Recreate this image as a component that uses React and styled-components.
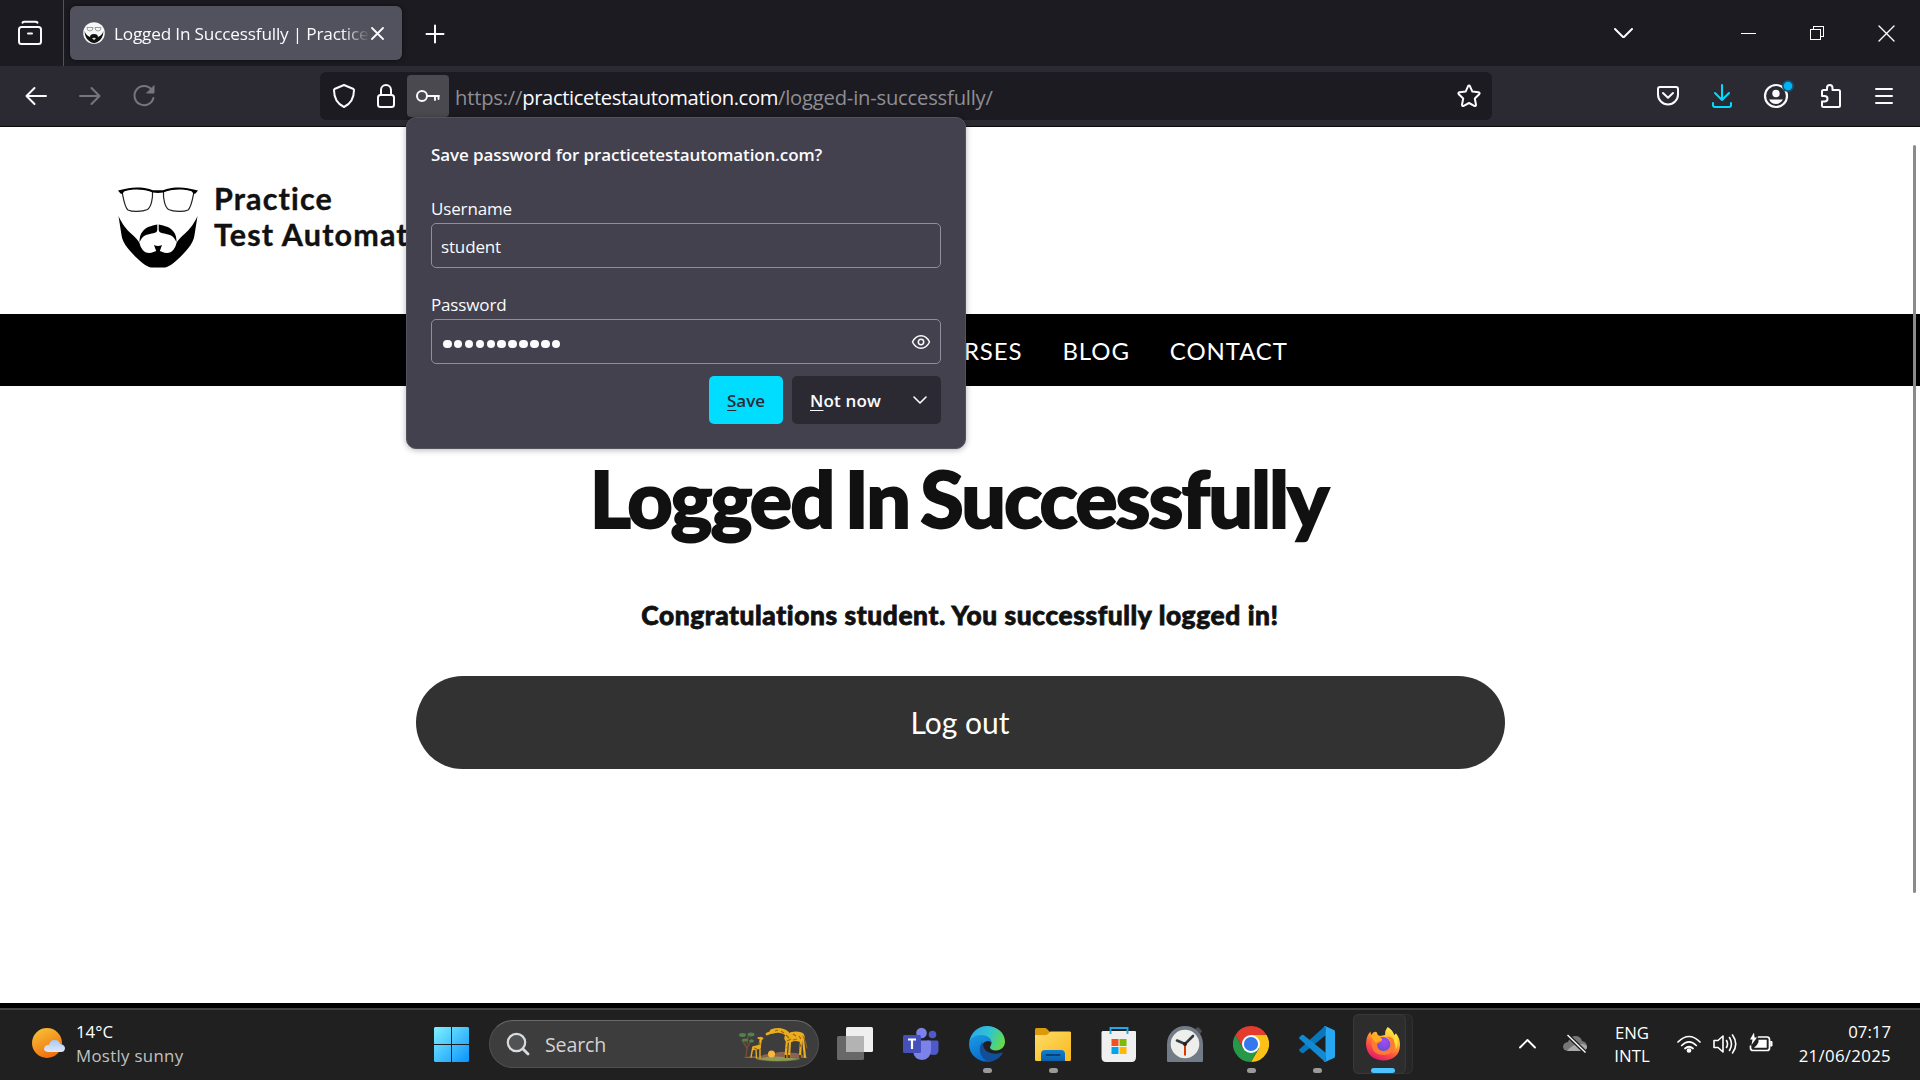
import React from "react";
import styled, { createGlobalStyle } from "styled-components";

const GlobalStyle = createGlobalStyle`
  * { box-sizing: border-box; }
  html, body { margin: 0; padding: 0; background: #000; overflow: hidden; }
  svg { display: block; flex: none; }
`;

const ui = `"Open Sans", "Noto Sans", sans-serif`;
const site = `Lato, sans-serif`;

const Screen = styled.div`
  width: 1920px;
  height: 1080px;
  display: flex;
  flex-direction: column;
  overflow: hidden;
  background: #000;
  font-family: ${ui};
`;

/* ---------- browser chrome ---------- */
const TabStrip = styled.header`
  height: 66px;
  display: flex;
  align-items: center;
  background: #1c1b22;
  color: #fbfbfe;
`;
const ViewButton = styled.div`
  width: 64px;
  height: 66px;
  padding-right: 3px;
  border-right: 1px solid #53525c;
  display: flex;
  align-items: center;
  justify-content: center;
`;
const Tab = styled.div`
  width: 332px;
  height: 54px;
  margin-left: 6px;
  padding: 0 17px 0 13px;
  display: flex;
  align-items: center;
  background: #52525e;
  border-radius: 6px;
  box-shadow: 0 0 5px rgba(0, 0, 0, 0.6);
`;
const TabTitle = styled.span`
  width: 256px;
  margin: 0 1px 0 9px;
  padding-top: 1px;
  white-space: nowrap;
  font-size: 17.2px;
  line-height: 26px;
  letter-spacing: -0.18px;
  mask-image: linear-gradient(to right, #000 228px, transparent 256px);
`;
const StripButton = styled.div`
  width: ${(p) => p.$w}px;
  height: 66px;
  padding-top: ${(p) => p.$pt || 0}px;
  display: flex;
  align-items: center;
  justify-content: center;
  margin-left: ${(p) => p.$ml || 0}px;
`;
const Spacer = styled.div`
  flex: 1;
`;
const NavBar = styled.div`
  height: 61px;
  padding: 0 9px 1px;
  display: flex;
  align-items: center;
  background: #2b2a33;
  border-bottom: 1px solid #0c0c0d;
  color: #fbfbfe;
`;
const ToolButton = styled.div`
  width: 54px;
  height: 48px;
  display: flex;
  align-items: center;
  justify-content: center;
  color: ${(p) => p.$color || "#fbfbfe"};
`;
const UrlBar = styled.div`
  width: 1172px;
  height: 48px;
  margin: 0 149px 0 149px;
  padding: 0 5px 0 3px;
  display: flex;
  align-items: center;
  background: #1c1b22;
  border-radius: 6px;
`;
const UrlIcon = styled.div`
  width: 42px;
  height: 42px;
  display: flex;
  align-items: center;
  justify-content: center;
  border-radius: 4px;
  background: ${(p) => (p.$active ? "#4a494f" : "transparent")};
  margin-right: ${(p) => p.$mr || 0}px;
`;
const Url = styled.span`
  flex: 1;
  font-size: 20.2px;
  line-height: 30px;
  letter-spacing: -0.2px;
  padding-top: 2px;
  white-space: nowrap;
  color: #8f8f94;
  b {
    font-weight: 400;
    color: #fbfbfe;
    letter-spacing: -0.38px;
  }
`;

/* ---------- web page ---------- */
const Page = styled.main`
  height: 876px;
  position: relative;
  display: flex;
  flex-direction: column;
  background: #fff;
  color: #111;
  font-family: ${site};
  font-variant-ligatures: none;
`;
const SiteHeader = styled.div`
  height: 187px;
  padding: 53px 0 0 118px;
  display: flex;
  align-items: flex-start;
`;
const LogoMark = styled.div`
  padding-top: 7px;
`;
const SiteName = styled.div`
  margin-left: 16px;
  font-size: 30.5px;
  line-height: 36px;
  font-weight: 700;
  letter-spacing: 1.15px;
  white-space: nowrap;
  -webkit-text-stroke: 0.4px #111;
`;
const Menu = styled.nav`
  height: 72px;
  padding-top: 1px;
  display: flex;
  align-items: center;
  justify-content: center;
  gap: 40px;
  background: #000;
  color: #fff;
  font-size: 24px;
  line-height: 36px;
  letter-spacing: 0.9px;
`;
const Article = styled.section`
  display: flex;
  flex-direction: column;
  align-items: center;
  padding-top: 66px;
`;
const Heading = styled.h1`
  margin: 0;
  padding-right: 3px;
  font-size: 79px;
  line-height: 92px;
  font-weight: 900;
  letter-spacing: -1.95px;
  word-spacing: -5.5px;
  white-space: nowrap;
  -webkit-text-stroke: 1.8px #111;
`;
const Message = styled.p`
  margin: 53px 0 0;
  font-size: 26.3px;
  line-height: 36px;
  font-weight: 900;
  letter-spacing: 0.6px;
  white-space: nowrap;
  -webkit-text-stroke: 0.8px #111;
`;
const LogOut = styled.button`
  width: 1089px;
  height: 93px;
  margin-top: 43px;
  padding: 0 0 2px;
  border: 0;
  border-radius: 47px;
  background: #323232;
  color: #fff;
  font-family: ${site};
  font-size: 30px;
`;
const ScrollThumb = styled.div`
  position: absolute;
  right: 4px;
  top: 18px;
  width: 3px;
  height: 748px;
  border-radius: 2px;
  background: #8b8b8b;
`;

/* ---------- password prompt ---------- */
const Prompt = styled.aside`
  position: absolute;
  left: 406px;
  top: 117px;
  width: 560px;
  height: 332px;
  padding: 24px 24px 0;
  background: #42414d;
  border: 1px solid #53525e;
  border-radius: 10px;
  box-shadow: 0 1px 6px rgba(0, 0, 0, 0.3);
  color: #fbfbfe;
  font-size: 17px;
  line-height: 26px;
  letter-spacing: -0.15px;
  z-index: 2;
`;
const PromptTitle = styled.div`
  font-weight: 600;
  letter-spacing: -0.1px;
  white-space: nowrap;
`;
const FieldLabel = styled.div`
  margin-top: ${(p) => p.$mt}px;
`;
const Field = styled.div`
  height: 45px;
  margin-top: ${(p) => p.$mt}px;
  padding: 0 9px;
  border: 1px solid #8f8f9d;
  border-radius: 5px;
  display: flex;
  align-items: center;
  justify-content: space-between;
  span {
    padding-top: 2px;
  }
`;
const Dots = styled.div`
  display: flex;
  gap: 2.4px;
  padding: 5px 0 0 2px;
`;
const Dot = styled.i`
  width: 8.5px;
  height: 8.5px;
  border-radius: 50%;
  background: #fbfbfe;
`;
const Actions = styled.div`
  margin-top: 12px;
  display: flex;
  justify-content: flex-end;
  gap: 9px;
`;
const Action = styled.button`
  width: ${(p) => p.$w}px;
  height: 48px;
  padding: 0 14px 0 18px;
  border: 0;
  border-radius: 5px;
  display: flex;
  align-items: center;
  justify-content: space-between;
  background: ${(p) => (p.$primary ? "#00ddff" : "#2b2a33")};
  color: ${(p) => (p.$primary ? "#2b2a33" : "#fbfbfe")};
  font-family: ${ui};
  font-size: 17px;
  font-weight: 600;
  letter-spacing: ${(p) => (p.$primary ? 0 : 0.15)}px;
  white-space: nowrap;
  u {
    text-underline-offset: 3px;
    text-decoration-thickness: 1px;
  }
`;

/* ---------- taskbar ---------- */
const Taskbar = styled.footer`
  height: 72px;
  margin-top: 5px;
  padding-bottom: 2px;
  border-top: 2px solid #434343;
  background: #202020;
  display: flex;
  align-items: center;
  color: #fff;
  font-size: 16.8px;
  line-height: 24px;
`;
const Weather = styled.div`
  width: 434px;
  padding-left: 32px;
  display: flex;
  align-items: center;
  gap: 11px;
`;
const Lines = styled.div`
  display: flex;
  flex-direction: column;
  white-space: nowrap;
  text-align: ${(p) => p.$align || "left"};
  margin-left: ${(p) => p.$ml || 0}px;
  width: ${(p) => (p.$w ? `${p.$w}px` : "auto")};
  line-height: ${(p) => p.$lh || 24}px;
`;
const Spread = styled.span`
  color: ${(p) => p.$color || "#fff"};
  letter-spacing: 0.33px;
`;
const Search = styled.div`
  width: 330px;
  height: 48px;
  margin: 0 18px 0 20px;
  padding: 0 9px 0 16px;
  display: flex;
  align-items: center;
  background: #3d3d3d;
  border: 1px solid #505050;
  border-top-color: #6a6a6a;
  border-radius: 24px;
  color: #d3d3d3;
  font-size: 19.6px;
  letter-spacing: -0.15px;
  span {
    flex: 1;
    margin-left: 15px;
    padding-top: 1px;
  }
`;
const Apps = styled.div`
  display: flex;
  gap: 6px;
  height: 60px;
  margin-left: -12px;
`;
const AppSlot = styled.div`
  width: 60px;
  height: 60px;
  padding-top: 12px;
  display: flex;
  flex-direction: column;
  align-items: center;
  gap: 6px;
  border-radius: 6px;
`;
const ActiveApp = styled.div`
  width: 60px;
  height: 60px;
  border-radius: 6px;
  background: #262626;
  box-shadow: inset 0 0 0 1px #303030;
`;
const ActiveFront = styled(AppSlot)`
  width: 53px;
  padding-left: 7px;
  background: #2d2d2d;
  box-shadow: inset 0 0 0 1px #383838;
`;
const Running = styled.i`
  width: ${(p) => (p.$active ? 24 : 9)}px;
  height: 5px;
  border-radius: 3px;
  background: ${(p) => (p.$active ? "#4cc2ff" : "#9a9a9a")};
`;
const Tray = styled.div`
  flex: 1;
  display: flex;
  align-items: center;
  justify-content: flex-end;
  padding-right: 29px;
`;
const TrayIcon = styled.div`
  width: 24px;
  height: 24px;
  margin-left: ${(p) => p.$ml}px;
  display: flex;
  align-items: center;
  justify-content: center;
`;

/* ---------- drawings ---------- */
const Line = ({ w = 24, h = 24, sw = 2, children, vb }) => (
  <svg width={w} height={h} viewBox={vb || `0 0 ${w} ${h}`} fill="none" stroke="currentColor" strokeWidth={sw} strokeLinecap="round" strokeLinejoin="round">
    {children}
  </svg>
);

const beardHalf = "M40.200 80.500H33C27 79.500 17 70 10 61.500C6 57 4 52 3.500 48L.5 29C4 37 9 43 13 46.500C17 50 20 53 21.500 56C22.500 61 26 66 31 66C35 66 37 63.500 40.200 64Z";
const moustache = "M39.300 37.500C33 39 28 40 25 44C22 47 21.500 51 21.500 55.500C23 52 24.500 49.500 28 48C33 46 39 47 39.300 43Z";
const lens = "M4 4.500C12 .5 26 .5 34.500 4.500C35 12 33 20 29.500 22.500C24 25 14 25 10 23C6.500 20 5.500 12 4 4.500Z";

const Beard = ({ size = 80, stroke = 1.2 }) => (
  <svg width={size} height={size + 1} viewBox="0 0 80 81">
    {[undefined, "matrix(-1 0 0 1 80 0)"].map((t, i) => (
      <g key={i} transform={t}>
        <path d={lens} fill="none" stroke="#222" strokeWidth={stroke} />
        <path d="M0 3.500C6 2 14 .2 20 .5C27 .6 31 2 35 3.200H40V6L35 5.500C27 2 14 1.500 6 4.500L4.500 7L2.500 6.500Z" />
        <path d={beardHalf} />
        <path d={moustache} />
      </g>
    ))}
    <path d="M36 58Q40 60 44 58L41.500 65H38.500Z" />
  </svg>
);

const Favicon = () => (
  <svg width="22" height="22" viewBox="0 0 22 22">
    <circle cx="11" cy="11" r="10.800" fill="#f7f7f7" />
    <path d="M4 5.500H10Q10 9 7 9T4 5.500ZM12 5.500H18Q18 9 15 9T12 5.500Z" fill="none" stroke="#777" strokeWidth=".7" />
    <path d="M1.500 9Q3 13.500 7 15Q7 12 11 12T15 15Q19 13.500 20.500 9Q20 17 14.500 20Q11 22 7.500 20Q2 17 1.500 9Z" fill="#111" />
    <path d="M9 16.500Q11 15 13 16.500L11 18Z" fill="#ddd" />
  </svg>
);

const ViewIcon = () => (
  <Line w={26} h={26}>
    <path d="M5.500 2.600Q6 1.800 7.500 1.800H18.500Q20 1.800 20.500 2.600" />
    <rect x="2" y="7" width="22" height="17" rx="2.500" />
    <path d="M11 13.500H15" />
  </Line>
);
const Cross = ({ s = 12, sw = 2 }) => (
  <Line w={s + 2} h={s + 2} sw={sw}>
    <path d={`M1 1L${s + 1} ${s + 1}M${s + 1} 1L1 ${s + 1}`} />
  </Line>
);
const Chevron = ({ w = 18, sw = 2, up }) => (
  <Line w={w + 2} h={w / 2 + 2} sw={sw}>
    <path d={up ? `M1 ${w / 2 + 1}L${w / 2 + 1} 1L${w + 1} ${w / 2 + 1}` : `M1 1L${w / 2 + 1} ${w / 2 + 1}L${w + 1} 1`} />
  </Line>
);
const Arrow = ({ flip }) => (
  <Line w={24} h={20}>
    <g transform={flip ? "matrix(-1 0 0 1 24 0)" : undefined}>
      <path d="M2.500 10H22M10.500 2L2.500 10L10.500 18" />
    </g>
  </Line>
);
const Reload = () => (
  <Line w={24} h={24}>
    <path d="M19.500 5.500A9.600 9.600 0 1 0 21.400 14" />
    <path d="M22 2V9H15Z" fill="currentColor" strokeWidth="1" />
  </Line>
);
const Shield = () => (
  <Line w={24} h={26}>
    <path d="M12 2L21.500 6Q22 6.300 22 7C22 14 19.500 20.500 12 24C4.500 20.500 2 14 2 7Q2 6.300 2.500 6Z" />
  </Line>
);
const Lock = () => (
  <Line w={20} h={26}>
    <rect x="2" y="12" width="16" height="12" rx="2.500" />
    <path d="M5 12V7A5 5 0 0 1 15 7V12" />
  </Line>
);
const Key = () => (
  <Line w={26} h={14}>
    <circle cx="7" cy="7" r="5" />
    <path d="M12 7H24M20 7V11M23.500 7V10" strokeWidth="1.900" />
  </Line>
);
const Star = () => (
  <Line w={26} h={26}>
    <path d="M13 2.500Q13.600 2.500 14 3.300L16.400 8.600L22.500 9.300Q24.300 9.700 23.200 11.200L18.800 15.500L20 21.700Q20 23.500 18.300 22.800L13 20L7.700 22.800Q6 23.500 6 21.700L7.200 15.500L2.800 11.200Q1.700 9.700 3.500 9.300L9.600 8.600L12 3.300Q12.400 2.500 13 2.500Z" />
  </Line>
);
const Pocket = () => (
  <Line w={24} h={22}>
    <path d="M4 2H20Q22 2 22 4V9.500A10 10 0 0 1 2 9.500V4Q2 2 4 2Z" />
    <path d="M7 8L12 12.800L17 8" />
  </Line>
);
const Download = () => (
  <Line w={23} h={26}>
    <path d="M11 2V17M4 10L11 17L18 10M2 20V22Q2 24 4 24H18Q20 24 20 22V20" />
  </Line>
);
const Account = () => (
  <svg width="42" height="34" viewBox="0 0 42 34">
    <circle cx="21" cy="17" r="11" fill="none" stroke="currentColor" strokeWidth="2.200" />
    <circle cx="21" cy="14.500" r="3.700" fill="currentColor" />
    <path d="M14 20.500H28Q25.500 25 21 25T14 20.500Z" fill="currentColor" />
    <circle cx="33" cy="7" r="6" fill="#164f70" />
    <circle cx="33" cy="7" r="4.300" fill="#00b3f4" />
  </svg>
);
const Puzzle = () => (
  <Line w={22} h={26}>
    <path d="M3 13V8.500Q3 7 4.500 7H8V5Q8 2 10.800 2Q13.500 2 13.500 5V7H19.500Q21 7 21 8.500V22.500Q21 24 19.500 24H4.500Q3 24 3 22.500V18.500H5.500Q8.500 18.500 8.500 15.700Q8.500 13 5.500 13Z" />
  </Line>
);
const Burger = () => (
  <Line w={20} h={18}>
    <path d="M2 2H18M2 9H18M2 16H18" />
  </Line>
);
const Minimise = () => (
  <svg width="15" height="15"><path d="M0 7H15" stroke="#fff" shapeRendering="crispEdges" /></svg>
);
const Restore = () => (
  <svg width="15" height="15" viewBox="0 0 15 15" fill="none" stroke="#fff" shapeRendering="crispEdges">
    <rect x=".5" y="3.500" width="10" height="10" />
    <path d="M3.500 3.500V.5H13.500V10.500H10.500" />
  </svg>
);
const Eye = () => (
  <Line w={20} h={16} sw={1.5}>
    <path d="M1.500 8Q4.500 1.800 10 1.800T18.500 8Q15.500 14.200 10 14.200T1.500 8Z" />
    <circle cx="10" cy="8" r="2.700" />
  </Line>
);

const SunCloud = () => (
  <svg width="33" height="32" viewBox="0 0 33 32">
    <defs>
      <linearGradient id="sun" x1=".2" y1="0" x2=".7" y2="1"><stop stopColor="#f8c136" /><stop offset="1" stopColor="#ee6a0d" /></linearGradient>
      <linearGradient id="cloud" x1="0" y1="0" x2="0" y2="1"><stop stopColor="#a9c8f5" /><stop offset="1" stopColor="#dfe9fa" /></linearGradient>
    </defs>
    <circle cx="15" cy="15" r="15" fill="url(#sun)" />
    <path d="M16 24Q12 23.500 12 20.500Q12.500 17 17 16.800Q18.500 11.500 23 12Q27 12 28 16Q33 16.500 33 20.500Q32.500 24 29 24Z" fill="url(#cloud)" />
  </svg>
);
const WindowsLogo = () => (
  <svg width="35" height="35" viewBox="0 0 35 35">
    <defs>
      <linearGradient id="win" gradientUnits="userSpaceOnUse" x1="0" y1="0" x2="35" y2="35"><stop stopColor="#80f2ff" /><stop offset="1" stopColor="#0a93fb" /></linearGradient>
    </defs>
    <path d="M1 0H17V17H0V1ZM18 0H34L35 1V17H18ZM0 18H17V35H1L0 34ZM18 18H35V34L34 35H18Z" fill="url(#win)" />
  </svg>
);
const Magnifier = () => (
  <svg width="24" height="24" viewBox="0 0 24 24" fill="none" stroke="#d8dcdf" strokeLinecap="round">
    <circle cx="10.500" cy="10.500" r="8.700" strokeWidth="2.200" fill="#505254" />
    <path d="M17 17L22 22" strokeWidth="2.800" />
  </svg>
);
const Giraffes = () => (
  <svg width="70" height="35" viewBox="0 0 70 35">
    <ellipse cx="39" cy="31.500" rx="22" ry="3" fill="#6d7440" />
    <path d="M4 31Q12 28 20 30Q26 26 34 27Q42 23 50 26Q60 25 69 31Z" fill="#8c6250" />
    <path d="M18 32Q36 27 59 32Q40 36 18 32Z" fill="#8f9a55" />
    <circle cx="32.500" cy="27" r="3.500" fill="#ffb638" />
    <path d="M7 30L8 21L3 13M8 21L13 12M8 17L9 9" stroke="#7a4b35" strokeWidth="1.500" fill="none" />
    <g fill="#4f8448">
      <ellipse cx="3.500" cy="8" rx="3.500" ry="1.900" /><ellipse cx="12" cy="7.500" rx="3.500" ry="1.900" /><ellipse cx="6" cy="13" rx="3" ry="1.600" /><ellipse cx="12.500" cy="14" rx="2.500" ry="1.500" />
    </g>
    <g stroke="#e9ad1e" fill="none" strokeLinecap="round" strokeLinejoin="round">
      <path d="M22 11L20.500 20" strokeWidth="2.400" />
      <path d="M19.500 11L23.500 11.500" strokeWidth="1.900" />
      <path d="M15 21L20 20" strokeWidth="4.200" />
      <path d="M13.500 22L12 30M17 23L17.500 31M21 22V31" strokeWidth="1.400" />
      <path d="M28 7L33 5" strokeWidth="2.800" />
      <path d="M33 4.500Q42 1.500 48 6.500L51 12" strokeWidth="4.500" />
      <path d="M50 11Q56 8 61 10" strokeWidth="9.500" />
      <path d="M48 13L46.500 30M51 15L50 30M62 13L61 30M64 12L66 30" strokeWidth="2.200" />
      <path d="M64 9Q67 14 68 21" strokeWidth="1" stroke="#a86516" />
    </g>
    <path d="M36 4L39 3M42 4L45 6M47 8L50 11M48 14L52 12M54 7L57 9M54 13L58 12M60 9L62 12M61 17L62 20M48 20L49 23M20 15L21 18M15 21L18 22" stroke="#a4660e" strokeWidth="1.200" />
    <path d="M46.500 28V31M50 28V31M61 28V31" stroke="#4b1c10" strokeWidth="1.600" />
  </svg>
);
const TaskView = () => (
  <svg width="36" height="36" viewBox="0 0 36 36">
    <rect x="9" y="1" width="27" height="25" rx="1.500" fill="#efefef" />
    <rect x="0" y="10" width="27" height="24" rx="1.500" fill="#686868" />
    <path d="M9 10H27V26H9Z" fill="#b3b3b3" />
  </svg>
);
const Teams = () => (
  <svg width="36" height="36" viewBox="0 0 36 36">
    <circle cx="29.500" cy="8.500" r="3.800" fill="#5059c9" />
    <path d="M24 14.500H34Q35.500 14.500 35.500 16V24Q35.500 29 30.500 29Q27 29 25 27Z" fill="#5059c9" />
    <circle cx="18.500" cy="7" r="5.300" fill="#7b83eb" />
    <path d="M10 14.500H26.500Q28 14.500 28 16V24.500Q27.500 33.500 19 34Q11 33.500 10 25Z" fill="#7b83eb" />
    <rect x="0" y="9" width="18" height="18" rx="1.500" fill="#4650bb" />
    <path d="M5 13.500H13M9 13.500V23" stroke="#fff" strokeWidth="2.200" />
  </svg>
);
const Edge = () => (
  <svg width="36" height="36" viewBox="0 0 36 36">
    <defs>
      <linearGradient id="edgeTop" x1="0" y1=".3" x2="1" y2=".6"><stop stopColor="#2ba8e8" /><stop offset=".5" stopColor="#2fc3d5" /><stop offset="1" stopColor="#67dc45" /></linearGradient>
      <linearGradient id="edgeLow" x1="0" y1="0" x2=".4" y2="1"><stop stopColor="#1a9de6" /><stop offset="1" stopColor="#0c6ccb" /></linearGradient>
    </defs>
    <path d="M0 17C1 7 9 0 18 0C28 0 36 7 36 15.500C36 21 32 24.500 27 24.500C23 24.500 21 23 21 21.500C21 20 22.500 19 22.500 16.500C22 12 16 9 10 10C5 11 2 13 0 17Z" fill="url(#edgeTop)" />
    <path d="M0 18C1 12 6 9 12 9C18 9 22.500 12.500 22.500 17C20 13.500 15 15 13.500 19C11 26 18 35 23 35C13 38 0 31 0 18Z" fill="url(#edgeLow)" />
    <path d="M13.500 16C8 22 11 33 20 36C26 35 31 32 33.500 27.500Q34 26 32.500 26.500C24 30 14 26 14 18Z" fill="#124f9b" />
  </svg>
);
const Folder = () => (
  <svg width="36" height="36" viewBox="0 0 36 36">
    <defs>
      <linearGradient id="fold" x1="0" y1="0" x2="1" y2="1"><stop stopColor="#ffdc68" /><stop offset="1" stopColor="#f8b91d" /></linearGradient>
      <linearGradient id="foldBlue" x1="0" y1="0" x2="0" y2="1"><stop stopColor="#127fd2" /><stop offset="1" stopColor="#0b5fa9" /></linearGradient>
    </defs>
    <path d="M0 3.500Q0 2 1.500 2H10Q11 2 12 3L15 6H36V14H0Z" fill="#dc9a0a" />
    <path d="M0 9H11Q12 9 13 8L15.500 5.500H35Q36 5.500 36 7V33.500Q36 35 34.500 35H1.500Q0 35 0 33.500Z" fill="url(#fold)" />
    <path d="M6 35V28Q6 24 10 24H26Q30 24 30 28V35Z" fill="url(#foldBlue)" />
    <path d="M11.500 29H24.500" stroke="#064277" strokeWidth="2" strokeLinecap="round" />
  </svg>
);
const Store = () => (
  <svg width="36" height="36" viewBox="0 0 36 36">
    <path d="M1.500 5H34.500L35 6V31Q35 36 30.500 36H5Q.5 36 .5 31V6Z" fill="#f0f0f0" />
    <path d="M9.500 8V2H26.500V8" fill="none" stroke="#20a8e8" strokeWidth="1.900" />
    <path d="M10.500 13H17.500V20H10.500Z" fill="#f25022" /><path d="M18.500 13H25.500V20H18.500Z" fill="#7fba00" />
    <path d="M10.500 21H17.500V28H10.500Z" fill="#00a4ef" /><path d="M18.500 21H25.500V28H18.500Z" fill="#ffb900" />
  </svg>
);
const Clock = () => (
  <svg width="36" height="36" viewBox="0 0 36 36">
    <path d="M28 3L31 1L35 5L33 8Z" fill="#4e5052" />
    <path d="M0 18A18 18 0 0 1 36 18V35Q36 36 35 36H1Q0 36 0 35Z" fill="#727c87" />
    <circle cx="18" cy="18" r="14.300" fill="#eeeeec" />
    <path d="M18 18V29.500" stroke="#d83b01" strokeWidth="2" />
    <path d="M10 14.500L18 18L26 10" fill="none" stroke="#343a40" strokeWidth="2.600" strokeLinecap="round" />
    <circle cx="18" cy="18" r="2" fill="#222" />
  </svg>
);
const Chrome = () => (
  <svg width="36" height="36" viewBox="0 0 36 36">
    <path d="M18 9H33.600A18 18 0 0 0 2.400 9L10.200 22.500Z" fill="#e33b2e" />
    <path d="M33.600 9A18 18 0 0 1 18 36L25.800 22.500L18 9Z" fill="#fbc116" />
    <path d="M2.400 9A18 18 0 0 0 18 36L25.800 22.500H10.200Z" fill="#279847" />
    <circle cx="18" cy="18" r="9" fill="#fff" />
    <circle cx="18" cy="18" r="7.100" fill="#3478ee" />
  </svg>
);
const VsCode = () => (
  <svg width="36" height="36" viewBox="0 0 36 36">
    <path d="M26 0L27 9L4.500 27Q3.500 27.500 2.500 26.800L.5 25Q-.3 24 .7 23Z" fill="#0878ba" />
    <path d="M26 36L27 27L4.500 9Q3.500 8.500 2.500 9.200L.5 11Q-.3 12 .7 13Z" fill="#1289d3" />
    <path d="M26 0L35 4Q36 4.500 36 6V30Q36 31.500 35 32L26 36Q25.500 36 24.500 35Q26.500 36 26.500 34V2Q26.500 .3 24.500 1Z" fill="#27a6f3" />
  </svg>
);
const Firefox = () => (
  <svg width="36" height="36" viewBox="0 0 36 36">
    <defs>
      <linearGradient id="fox" x1=".8" y1="0" x2=".3" y2="1"><stop stopColor="#fff44f" /><stop offset=".35" stopColor="#ffb92b" /><stop offset=".65" stopColor="#ff5a3c" /><stop offset="1" stopColor="#e3156e" /></linearGradient>
      <radialGradient id="globe" cx=".6" cy=".3" r=".8"><stop stopColor="#a34af5" /><stop offset="1" stopColor="#5451cf" /></radialGradient>
    </defs>
    <path d="M22.500 1Q28 4 29 9.500L31 7.500Q35 12 35 19Q34.500 34 18 34.500Q2 33.500 1 18Q1 10 5.500 5.500L6 9Q9 5 11.500 6Q12 9 15 10L20 9Q20 4 22.500 1Z" fill="url(#fox)" />
    <circle cx="18" cy="18.500" r="7.500" fill="url(#globe)" />
    <path d="M6 11Q12 9 17 13L17 15Q14 17 12 18Q12 24 18 25Q23 25 26 20Q26 13 21 11Q27 10 29.500 15Q31 28 19 29Q9 29 7 21Q6 15 6 11Z" fill="#ff7a32" />
    <path d="M5.500 10Q10 8 15 11L17.500 14Q13 15 11 17Q8 14 5.500 10Z" fill="#ffad25" />
    <path d="M22.500 1Q29 6 29 15Q34 24 26 28Q36 22 31 7.500L29 9.500Q28 4 22.500 1Z" fill="#ffdf38" />
  </svg>
);
const CloudOff = () => (
  <svg width="24" height="20" viewBox="0 0 24 20">
    <path d="M5 17Q0 16.500 0 12.500Q.5 8.500 5 8Q7 1.500 12.500 2Q17.500 2 19 7Q24 8 24 12.500Q23.500 17 19 17Z" fill="#777" />
    <path d="M4 17Q10 9 19 10Q24 11 24 13Q23.500 17 19 17Z" fill="#aaa" />
    <path d="M4.500 1L22.500 18.500" stroke="#202020" strokeWidth="4" />
    <path d="M4.500 1L22.500 18.500" stroke="#fff" strokeWidth="1.400" />
  </svg>
);
const Wifi = () => (
  <Line w={24} h={20} sw={1.7}>
    <path d="M1 8Q12-3 23 8M4.700 11.500Q12 4.200 19.300 11.500M8 14.500Q12 11 16 14.500" />
    <circle cx="12" cy="16.500" r="1.500" fill="#fff" />
  </Line>
);
const Speaker = () => (
  <Line w={24} h={22} sw={1.6}>
    <path d="M1 7.500H5L10 3V19L5 14.500H1ZM13.500 7.500Q15.500 11 13.500 14.500M16.500 4.500Q20.500 11 16.500 17.500M19.500 2Q26 11 19.500 20" />
  </Line>
);
const Battery = () => (
  <Line w={24} h={22} sw={1.7}>
    <path d="M9.500 4H18Q20.500 4 20.500 6.500V15Q20.500 17.500 18 17.500H4Q1.500 17.500 1.500 15V13" />
    <path d="M9.500 6.800H17.700V14.800H5Q8.500 12.500 9.500 9Z" fill="#fff" stroke="none" />
    <path d="M21.500 8.500H23V13H21.500Z" fill="#fff" strokeWidth="1" />
    <path d="M5 -.5L1 6.500H3.500L2.500 12L8 4.500H5.500Z" fill="#fff" stroke="none" />
  </Line>
);

const apps = [
  { name: "taskview", Icon: TaskView },
  { name: "teams", Icon: Teams },
  { name: "edge", Icon: Edge, running: true },
  { name: "folder", Icon: Folder, running: true },
  { name: "store", Icon: Store },
  { name: "clock", Icon: Clock },
  { name: "chrome", Icon: Chrome, running: true },
  { name: "vscode", Icon: VsCode, running: true },
];

const Browser = () => (
  <>
    <TabStrip>
      <ViewButton><ViewIcon /></ViewButton>
      <Tab>
        <Favicon />
        <TabTitle>Logged In Successfully | Practice</TabTitle>
        <Cross s={11} sw={1.8} />
      </Tab>
      <StripButton $w={65} $pt={1}>
        <Line w={20} h={20}><path d="M10 1.500V18.500M1.500 10H18.500" /></Line>
      </StripButton>
      <Spacer />
      <StripButton $w={54}><Chevron w={17} sw={2} /></StripButton>
      <StripButton $w={69} $ml={64}><Minimise /></StripButton>
      <StripButton $w={69}><Restore /></StripButton>
      <StripButton $w={68}><Cross s={15} sw={1.4} /></StripButton>
    </TabStrip>
    <NavBar>
      <ToolButton><Arrow /></ToolButton>
      <ToolButton $color="#77767d"><Arrow flip /></ToolButton>
      <ToolButton $color="#77767d"><Reload /></ToolButton>
      <UrlBar>
        <UrlIcon><Shield /></UrlIcon>
        <UrlIcon><Lock /></UrlIcon>
        <UrlIcon $active $mr={6}><Key /></UrlIcon>
        <Url>https://<b>practicetestautomation.com</b>/logged-in-successfully/</Url>
        <UrlIcon $mr={-3}><Star /></UrlIcon>
      </UrlBar>
      <ToolButton><Pocket /></ToolButton>
      <ToolButton $color="#00ddff"><Download /></ToolButton>
      <ToolButton><Account /></ToolButton>
      <ToolButton><Puzzle /></ToolButton>
      <ToolButton><Burger /></ToolButton>
    </NavBar>
  </>
);

const SavePrompt = () => (
  <Prompt>
    <PromptTitle>Save password for practicetestautomation.com?</PromptTitle>
    <FieldLabel $mt={28}>Username</FieldLabel>
    <Field $mt={1}><span>student</span></Field>
    <FieldLabel $mt={24}>Password</FieldLabel>
    <Field $mt={1}>
      <Dots>{Array.from({ length: 11 }, (_, i) => <Dot key={i} />)}</Dots>
      <Eye />
    </Field>
    <Actions>
      <Action $primary $w={74}><span><u>S</u>ave</span></Action>
      <Action $w={149}><span><u>N</u>ot now</span><Chevron w={12} sw={1.6} /></Action>
    </Actions>
  </Prompt>
);

export default function App() {
  return (
    <Screen>
      <GlobalStyle />
      <Browser />
      <Page>
        <SiteHeader>
          <LogoMark><Beard /></LogoMark>
          <SiteName>Practice<br />Test Automation</SiteName>
        </SiteHeader>
        <Menu>
          <span>HOME</span>
          <span>PRACTICE</span>
          <span>COURSES</span>
          <span>BLOG</span>
          <span>CONTACT</span>
        </Menu>
        <Article>
          <Heading>Logged In Successfully</Heading>
          <Message>Congratulations student. You successfully logged in!</Message>
          <LogOut>Log out</LogOut>
        </Article>
        <ScrollThumb />
      </Page>
      <SavePrompt />
      <Taskbar>
        <Weather>
          <SunCloud />
          <Lines><span>14°C</span><Spread $color="#c2c2c2">Mostly sunny</Spread></Lines>
        </Weather>
        <WindowsLogo />
        <Search><Magnifier /><span>Search</span><Giraffes /></Search>
        <Apps>
          {apps.map(({ name, Icon, running }) => (
            <AppSlot key={name}><Icon />{running && <Running />}</AppSlot>
          ))}
          <ActiveApp><ActiveFront><Firefox /><Running $active /></ActiveFront></ActiveApp>
        </Apps>
        <Tray>
          <TrayIcon $ml={0}><Chevron up w={15} sw={1.9} /></TrayIcon>
          <TrayIcon $ml={24}><CloudOff /></TrayIcon>
          <Lines $ml={25} $w={40} $align="center" $lh={23}><span>ENG</span><span>INTL</span></Lines>
          <TrayIcon $ml={25}><Wifi /></TrayIcon>
          <TrayIcon $ml={12}><Speaker /></TrayIcon>
          <TrayIcon $ml={12}><Battery /></TrayIcon>
          <Lines $ml={21} $w={97} $align="right"><span>07:17</span><Spread>21/06/2025</Spread></Lines>
        </Tray>
      </Taskbar>
    </Screen>
  );
}
